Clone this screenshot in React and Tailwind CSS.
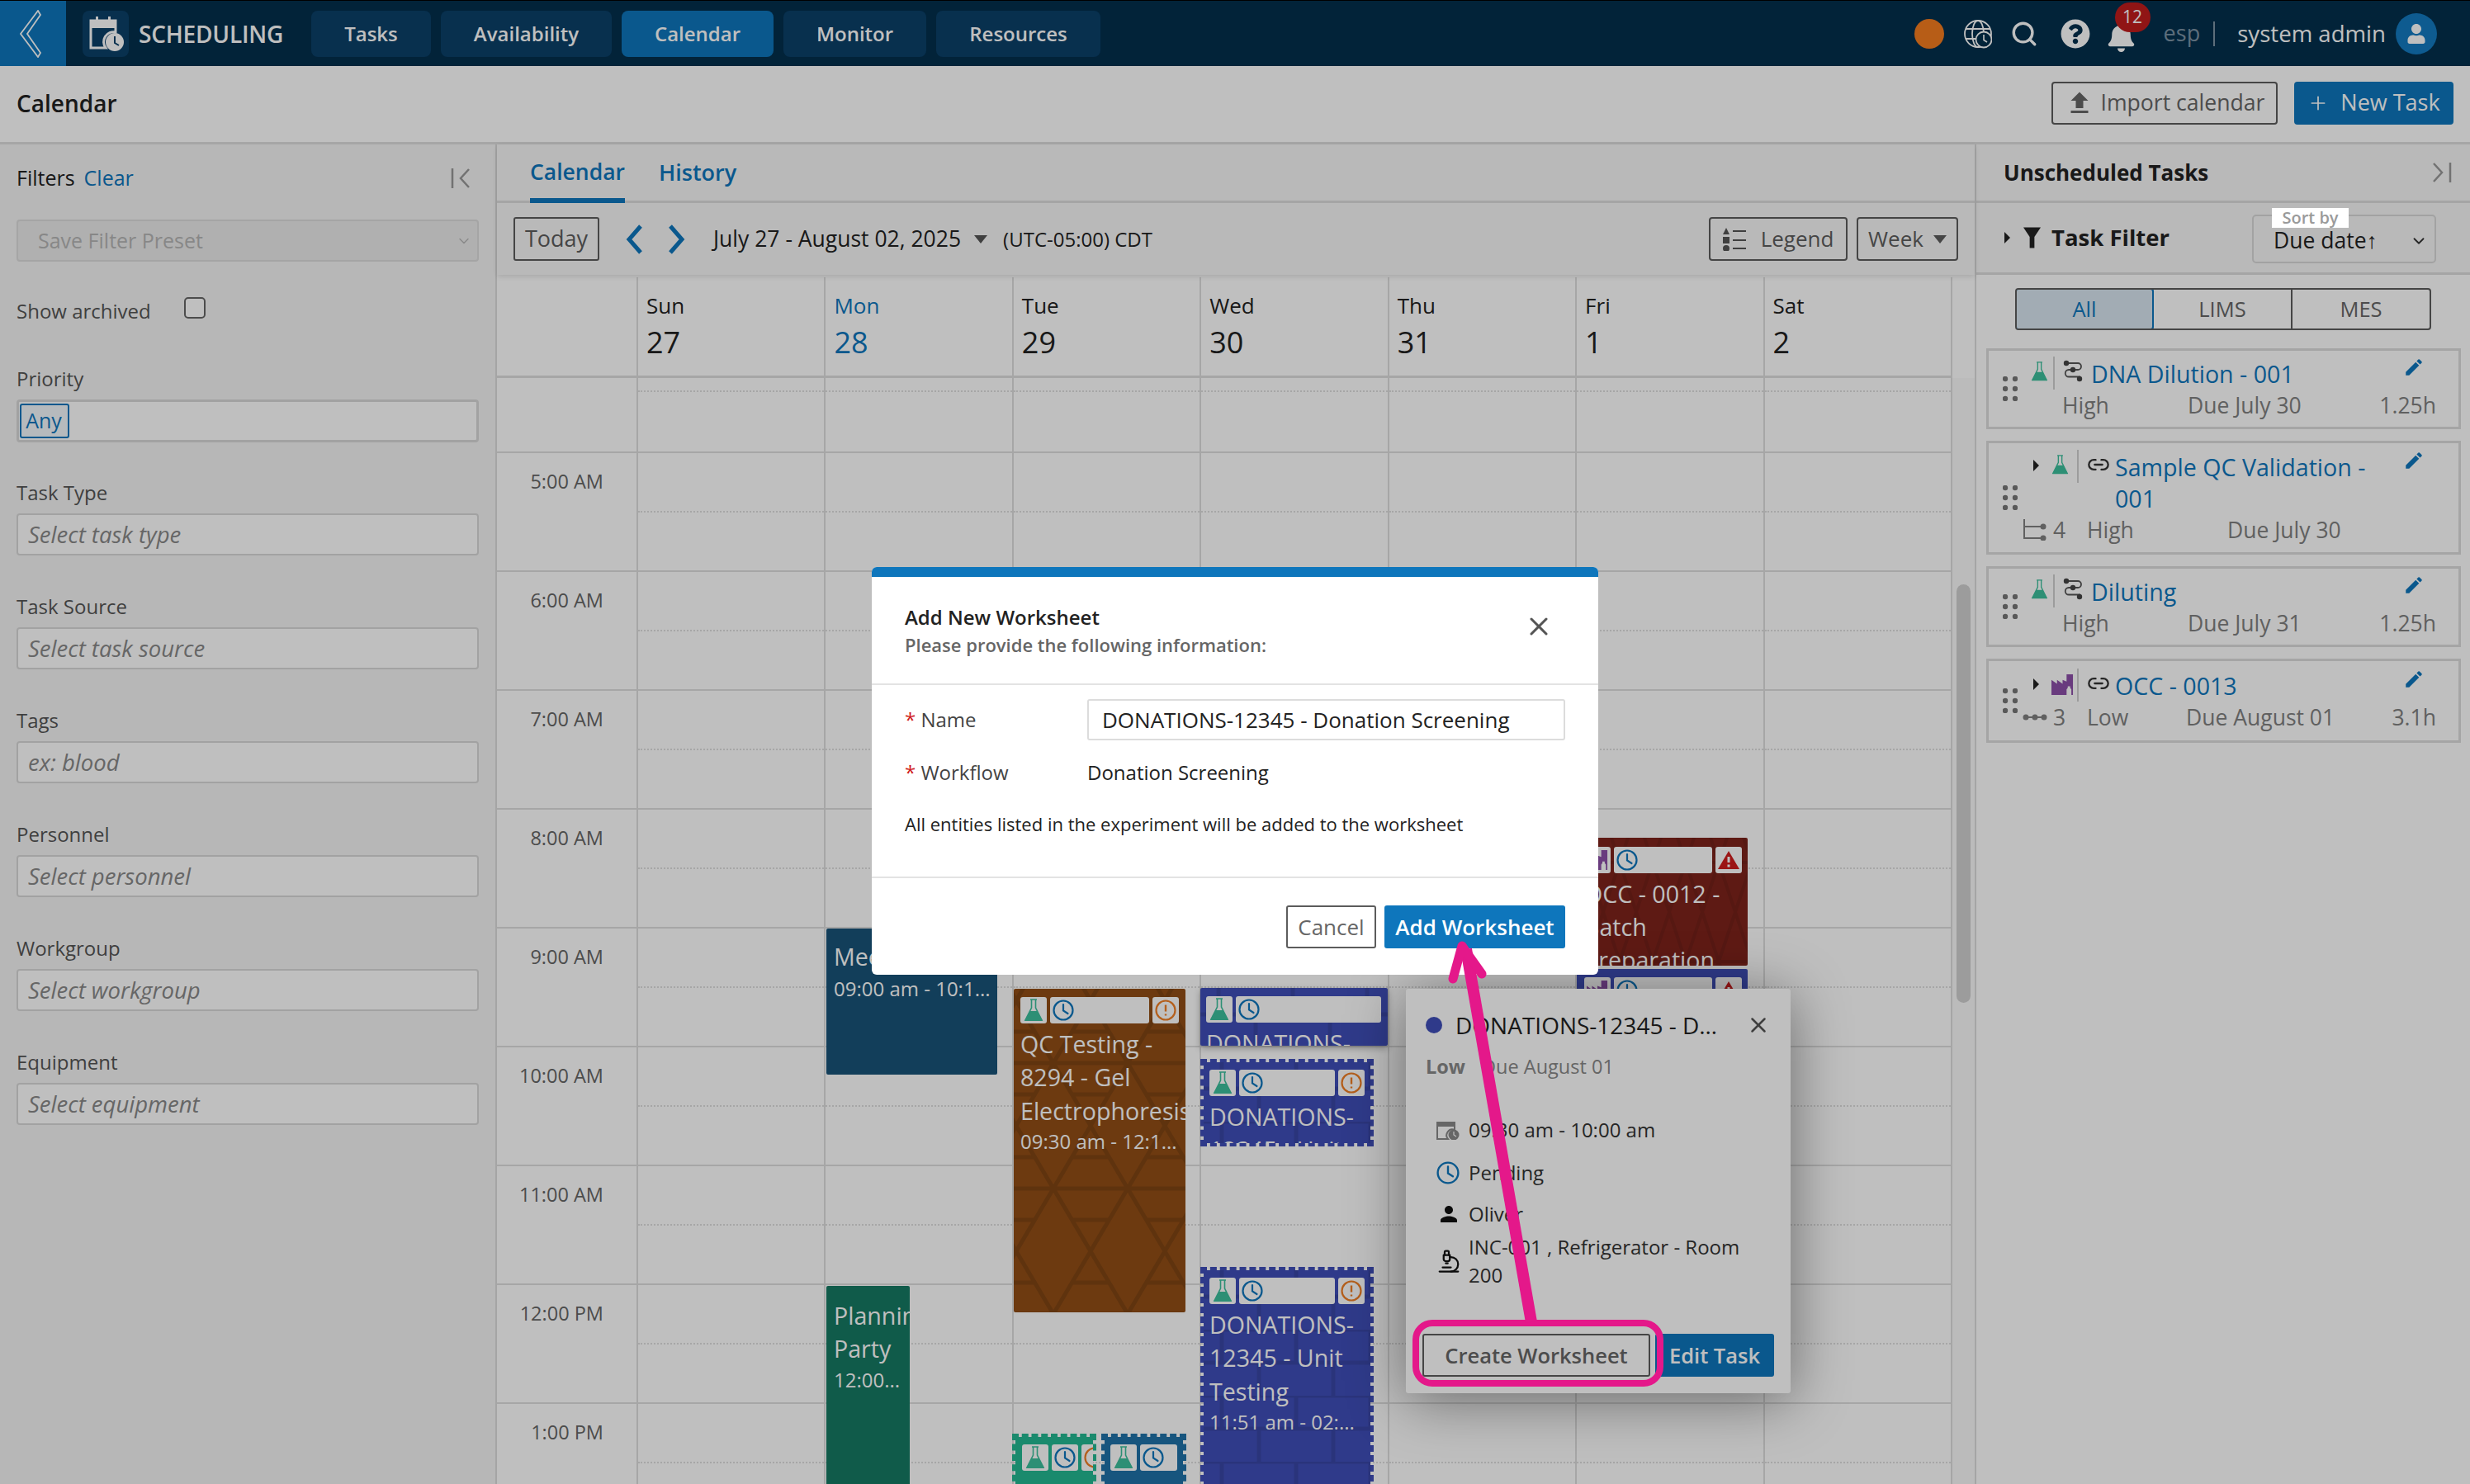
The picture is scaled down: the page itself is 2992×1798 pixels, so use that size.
import React from 'react';
import { Search, Plus, Link2, Microscope, ChevronDown, X } from 'lucide-react';
import { MdEdit, MdPerson, MdFileUpload } from 'react-icons/md';
import { FaBell, FaQuestionCircle, FaUser } from 'react-icons/fa';

const Flask = ({ s = 'w-[24px] h-[28px]' }) => (
  <svg viewBox="0 0 24 28" className={s}>
    <path d="M8 1h8M9.5 1v10L2 26h20L14.5 11V1" fill="none" stroke="#3cbf9c" strokeWidth="1.6" />
    <path d="M7.5 15h9L23 27H1z" fill="#3cbf9c" />
  </svg>
);
const Clock = ({ s = 'w-[26px] h-[26px]' }) => (
  <svg viewBox="0 0 26 26" className={s}>
    <circle cx="13" cy="13" r="11.5" fill="none" stroke="#0e76bc" strokeWidth="2.2" />
    <path d="M13 6v7.5l5.5 3.5" fill="none" stroke="#0e76bc" strokeWidth="2.2" strokeLinecap="round" />
  </svg>
);
const AlertC = () => (
  <svg viewBox="0 0 26 26" className="w-[26px] h-[26px]">
    <circle cx="13" cy="13" r="11.5" fill="none" stroke="#f07f26" strokeWidth="2.2" />
    <path d="M13 6.5v8M13 17.5v2" fill="none" stroke="#f07f26" strokeWidth="2.4" />
  </svg>
);
const AlertT = () => (
  <svg viewBox="0 0 26 24" className="w-[26px] h-[24px]">
    <path d="M13 1L26 23H0z" fill="#cf1d1d" />
    <path d="M13 8v7M13 17.5v3" stroke="#fff" strokeWidth="3" />
  </svg>
);
const Factory = ({ s = 'w-[28px] h-[28px]' }) => (
  <svg viewBox="0 0 28 28" className={s}>
    <path d="M0 27V8l7 5V8l7 5V8l5 2V1h8v26z" fill="#8c4fa8" />
    <path d="M19 27v-7l1.500-2V16h3v2l1.500 2v7z" fill="#fff" />
  </svg>
);
const Workflow = () => (
  <svg viewBox="0 0 24 28" className="w-[24px] h-[28px]">
    <path d="M4 4h14a4 4 0 010 8H7a4 4 0 000 8.500h14" fill="none" stroke="#555" strokeWidth="1.8" />
    <circle cx="4" cy="4" r="3.200" fill="#444" /><circle cx="12" cy="12" r="3.200" fill="#444" /><circle cx="20" cy="23" r="3.200" fill="#444" />
  </svg>
);
const Dots = () => (
  <svg viewBox="0 0 18 30" className="w-[18px] h-[30px] shrink-0">
    {[3, 15].map((x) => [3, 15, 27].map((y) => <circle key={x + '-' + y} cx={x} cy={y} r="3.200" fill="#777" />))}
  </svg>
);
const Caret = () => (
  <svg viewBox="0 0 7 14" className="w-[7px] h-[14px] shrink-0"><path d="M0 0l7 7-7 7z" fill="#222" /></svg>
);
const Pattern = ({ kind, id }) => (
  <svg className="absolute inset-0 w-full h-full">
    <defs>
      {kind === 'cube' && (
        <pattern id={id} width="90" height="152" patternUnits="userSpaceOnUse" x="3" y="90">
          <path d="M45 0L90 76L45 152L0 76ZM0 0H90M0 38H22M68 38H90M0 114H22M68 114H90M0 152H90" fill="none" stroke="rgba(0,0,0,.13)" strokeWidth="5" />
        </pattern>
      )}
      {kind === 'brick' && (
        <pattern id={id} width="90" height="80" patternUnits="userSpaceOnUse" y="-8">
          <path d="M0 0H90M0 40H90M22 0V40M67 40V80" fill="none" stroke="rgba(0,0,0,.1)" strokeWidth="5" />
        </pattern>
      )}
      {kind === 'tri' && (
        <pattern id={id} width="80" height="120" patternUnits="userSpaceOnUse" x="-8" y="-30">
          <path d="M0 0L40 120M80 0L40 120M0 120L40 0M80 120L40 0M0 60H80" fill="none" stroke="rgba(0,0,0,.09)" strokeWidth="4" />
        </pattern>
      )}
    </defs>
    <rect width="100%" height="100%" fill={`url(#${id})`} />
  </svg>
);
const Tiles = ({ wide, alert, tri, factory, cls = 'gap-[4px]' }) => (
  <div className={`relative flex h-[32px] ${cls}`}>
    <div className="w-[32px] h-full bg-white rounded-[3px] flex items-center justify-center shrink-0">
      {factory ? <Factory s="w-[26px] h-[26px]" /> : <Flask />}
    </div>
    <div className={`${wide} h-full bg-white rounded-[3px] flex items-center pl-[3px] shrink-0`}><Clock /></div>
    {alert && <div className="w-[32px] h-full bg-white rounded-[3px] flex items-center justify-center shrink-0"><AlertC /></div>}
    {tri && <div className="w-[32px] h-full bg-white rounded-[3px] flex items-center justify-center shrink-0"><AlertT /></div>}
  </div>
);
const Title = ({ children }) => <div className="relative text-[28.6px] leading-[40.3px] text-white">{children}</div>;
const Time = ({ children }) => <div className="relative text-[24px] leading-[34px] text-white whitespace-nowrap">{children}</div>;

const hours = ['5:00 AM', '6:00 AM', '7:00 AM', '8:00 AM', '9:00 AM', '10:00 AM', '11:00 AM', '12:00 PM', '1:00 PM'];
const days = [['Sun', '27'], ['Mon', '28'], ['Tue', '29'], ['Wed', '30'], ['Thu', '31'], ['Fri', '1'], ['Sat', '2']];
const filters = [
  ['Task Source', 'Select task source'], ['Tags', 'ex: blood'], ['Personnel', 'Select personnel'],
  ['Workgroup', 'Select workgroup'], ['Equipment', 'Select equipment'],
];

function TopBar() {
  return (
    <header className="h-20 flex items-center bg-[#032f4d] border-t border-black text-white shrink-0">
      <div className="w-20 h-full bg-[#0e76bc] flex items-center justify-center pr-[6px]">
        <svg viewBox="0 0 28 58" className="w-[28px] h-[58px]"><path d="M23 1L2 29l21 28 3-5L10 29 26 6z" fill="none" stroke="#fff" strokeWidth="1.800" /></svg>
      </div>
      <div className="ml-5 w-14 h-14 rounded-[8px] bg-[#0b4069] flex items-center justify-center">
        <svg viewBox="0 0 44 44" className="w-[44px] h-[44px]">
          <path d="M4 6h30v14a12 12 0 00-12 19H4z" fill="none" stroke="#fff" strokeWidth="3" />
          <path d="M4 6h30v9H4zM10 1h3v7h-3zM25 1h3v7h-3z" fill="#fff" />
          <circle cx="33" cy="32" r="11" fill="#fff" />
          <path d="M33 25v8l5 3" fill="none" stroke="#0b4069" strokeWidth="2" />
        </svg>
      </div>
      <div className="ml-3 w-[209px] text-[28px] font-semibold tracking-[-0.2px]">SCHEDULING</div>
      <nav className="flex gap-3 text-[24px] font-semibold">
        <div className="w-[145px] h-14 rounded-[8px] bg-[#0b4069] flex items-center justify-center">Tasks</div>
        <div className="w-[207px] h-14 rounded-[8px] bg-[#0b4069] flex items-center justify-center">Availability</div>
        <div className="w-[184px] h-14 rounded-[8px] bg-[#0e76bc] flex items-center justify-center">Calendar</div>
        <div className="w-[173px] h-14 rounded-[8px] bg-[#0b4069] flex items-center justify-center">Monitor</div>
        <div className="w-[199px] h-14 rounded-[8px] bg-[#0b4069] flex items-center justify-center">Resources</div>
      </nav>
      <div className="ml-auto flex items-center pr-10">
        <div className="w-9 h-9 rounded-full bg-[#f57c1f] -ml-[2px]"></div>
        <div className="ml-6 relative w-[34px] h-[36px]">
          <svg viewBox="0 0 34 36" className="w-[34px] h-[36px]">
            <g fill="none" stroke="#fff" strokeWidth="1.800">
              <circle cx="17" cy="18" r="16" /><ellipse cx="17" cy="18" rx="7" ry="16" /><path d="M2 12h30M2 24h14" />
            </g>
            <circle cx="24" cy="25" r="9.500" fill="#032f4d" stroke="#fff" strokeWidth="1.800" />
            <path d="M24 19v6.500l4 2.500" fill="none" stroke="#fff" strokeWidth="1.600" />
          </svg>
        </div>
        <Search className="ml-[22px] w-[34px] h-[36px]" strokeWidth={2.400} />
        <FaQuestionCircle className="ml-[27px] w-9 h-9" />
        <div className="ml-[21px] relative w-[33px] h-[36px] mt-[8px]">
          <FaBell className="w-[33px] h-[36px]" />
          <div className="absolute left-[9px] top-[-24px] w-[43px] h-[36px] rounded-full bg-[#c01c1c] flex items-center justify-center text-[21px]">12</div>
        </div>
        <div className="ml-[35px] text-[27px] text-[#7d93a5]">esp</div>
        <div className="ml-[16px] w-[2px] h-[30px] bg-[#7d93a5]"></div>
        <div className="ml-[27px] text-[27.600px]">system admin</div>
        <div className="ml-3 w-[50px] h-[50px] rounded-full bg-[#137ac0] flex items-center justify-center"><FaUser className="w-[24px] h-[24px]" /></div>
      </div>
    </header>
  );
}

function PageHeader() {
  return (
    <div className="h-[95px] shrink-0 bg-white border-b-[3px] border-[#dedede] flex items-center pl-5 pr-5 pb-[3px]">
      <div className="text-[28px] font-semibold text-[#222]">Calendar</div>
      <button className="ml-auto w-[274px] h-[52px] border-[2px] border-[#5c5c5c] rounded-[4px] flex items-center justify-center text-[26.600px] text-[#666]">
        <MdFileUpload className="w-[36px] h-[42px] mr-[8px]" />Import calendar
      </button>
      <button className="ml-5 w-[193px] h-[52px] rounded-[4px] bg-[#0e76bc] text-white flex items-center justify-center text-[27px] font-medium">
        <Plus className="w-[26px] h-[26px] mr-[14px]" strokeWidth={1.600} />New Task
      </button>
    </div>
  );
}

function Field({ label, children }) {
  return (
    <div>
      <div className="text-[24px] leading-[32px] text-[#555]">{label}</div>
      {children}
    </div>
  );
}

function LeftPanel() {
  return (
    <aside className="w-[602px] shrink-0 bg-[#f5f5f5] border-r-2 border-[#dcdcdc] px-5 pt-[23px]">
      <div className="flex items-center h-[36px] text-[25px] font-medium">
        <span className="text-[#222]">Filters</span>
        <span className="ml-[11px] text-[#0e76bc]">Clear</span>
        <svg viewBox="0 0 24 24" className="ml-auto mr-[10px] w-[24px] h-[24px]"><path d="M2 0v24M22 1L12 12l10 11" fill="none" stroke="#999" strokeWidth="2.500" /></svg>
      </div>
      <div className="mt-[32px] h-[51px] w-[560px] rounded-[4px] border-2 border-[#dcdcdc] bg-[#ebebeb] flex items-center pl-[24px] pr-[6px] text-[25px] text-[#b5b5b5]">
        Save Filter Preset
        <ChevronDown className="ml-auto w-[20px] h-[20px]" strokeWidth={1.500} />
      </div>
      <div className="mt-[47px] flex items-center h-[26px]">
        <span className="text-[24px] text-[#555]">Show archived</span>
        <div className="ml-[40px] -mt-[8px] w-[26px] h-[26px] rounded-[5px] border-2 border-[#666] bg-white"></div>
      </div>
      <div className="mt-[53px]">
        <Field label="Priority">
          <div className="mt-[9px] h-[52px] rounded-[4px] border-[3px] border-[#d8d8d8] bg-white flex items-center pl-[1px]">
            <span className="w-[60px] h-[42px] rounded-[3px] border-2 border-[#0e76bc] text-[#0e76bc] text-[25px] flex items-center justify-center pr-[2px] bg-[#f3f8fc]">Any</span>
          </div>
        </Field>
      </div>
      <div className="mt-[45px] flex flex-col gap-[46px] w-[560px]">
        <Field label="Task Type">
          <div className="mt-[9px] h-[51px] rounded-[4px] border-2 border-[#d8d8d8] bg-white flex items-center pl-[12px] text-[27.500px] italic text-[#888]">Select task type</div>
        </Field>
        {filters.map(([l, p]) => (
          <Field key={l} label={l}>
            <div className="mt-[9px] h-[51px] rounded-[4px] border-2 border-[#d8d8d8] bg-white flex items-center pl-[12px] text-[27.500px] italic text-[#888]">{p}</div>
          </Field>
        ))}
      </div>
    </aside>
  );
}

function Toolbar() {
  return (
    <div className="relative z-10 shrink-0 bg-[#f7f7f7] shadow-[0_2px_6px_rgba(0,0,0,0.12)]">
      <div className="h-[71px] border-b-[3px] border-[#dcdcdc] flex items-stretch pl-[40px]">
        <div className="relative flex items-center text-[26.500px] font-semibold text-[#0e76bc]">
          Calendar
          <div className="absolute left-0 right-0 bottom-[-3px] h-[6px] bg-[#0e76bc]"></div>
        </div>
        <div className="ml-[41px] flex items-center text-[27px] font-semibold text-[#0e76bc]">History</div>
      </div>
      <div className="h-[87px] flex items-center pl-[20px] pr-[20px]">
        <button className="w-[104px] h-[53px] rounded-[3px] border-2 border-[#5c5c5c] text-[27px] text-[#5c5c5c] font-medium">Today</button>
        <svg viewBox="0 0 22 36" className="ml-[32px] w-[22px] h-[36px]"><path d="M18 2L4 18l14 16" fill="none" stroke="#0e76bc" strokeWidth="5" /></svg>
        <svg viewBox="0 0 22 36" className="ml-[28px] w-[22px] h-[36px]"><path d="M4 2l14 16L4 34" fill="none" stroke="#0e76bc" strokeWidth="5" /></svg>
        <span className="ml-[34px] text-[26.500px] font-medium text-[#222] whitespace-nowrap">July 27 - August 02, 2025</span>
        <svg viewBox="0 0 16 10" className="ml-[16px] w-[16px] h-[10px]"><path d="M0 0h16L8 10z" fill="#555" /></svg>
        <span className="ml-[19px] text-[24px] text-[#222] whitespace-nowrap">(UTC-05:00) CDT</span>
        <button className="ml-auto w-[168px] h-[53px] rounded-[4px] border-2 border-[#5c5c5c] flex items-center justify-center text-[26px] text-[#5c5c5c]">
          <svg viewBox="0 0 28 28" className="w-[28px] h-[28px] mr-[18px]">
            <path d="M4 0l4 8H0zM0 11h8v8H0z" fill="#555" /><circle cx="4" cy="25" r="4" fill="#555" />
            <path d="M12 4h16M12 15h16M12 25h16" stroke="#555" strokeWidth="2" />
          </svg>Legend
        </button>
        <button className="ml-[11px] w-[123px] h-[53px] rounded-[4px] border-2 border-[#5c5c5c] flex items-center justify-center text-[26px] text-[#5c5c5c]">
          Week<svg viewBox="0 0 16 10" className="ml-[12px] w-[16px] h-[10px]"><path d="M0 0h16L8 10z" fill="#5c5c5c" /></svg>
        </button>
      </div>
    </div>
  );
}

function Grid() {
  return (
    <div className="relative flex-1 overflow-hidden bg-white">
      <div className="flex w-full h-full">
        <div className="w-[1761px] shrink-0">
          <div className="grid grid-cols-[169px_repeat(7,227.43px)] h-[125px] border-b-[3px] border-[#dedede] pt-[3px]">
            <div></div>
            {days.map(([d, n]) => (
              <div key={d} className={`border-l-2 border-[#dedede] pl-[10px] pt-[16px] ${d === 'Mon' ? 'text-[#0e76bc]' : 'text-[#222]'}`}>
                <div className="text-[26px] leading-[36px]">{d}</div>
                <div className="text-[36px] leading-[48px] mt-[3px]">{n}</div>
              </div>
            ))}
          </div>
          <div className="grid grid-cols-[169px_repeat(7,227.43px)] h-[89px]">
            <div></div>
            {days.map(([d]) => (
              <div key={d} className="border-l-2 border-[#dedede]">
                <div className="h-[17px] border-b-2 border-dotted border-[#dedede]"></div>
              </div>
            ))}
          </div>
          {hours.map((h) => (
            <div key={h} className="grid grid-cols-[169px_repeat(7,227.43px)] h-[144px] border-t-2 border-[#dedede]">
              <div className="pr-[40px] pt-[18px] text-right text-[23.500px] leading-[32px] text-[#666]">{h}</div>
              {days.map(([d]) => (
                <div key={d} className="border-l-2 border-[#dedede]">
                  <div className="h-[72px] border-b-2 border-dotted border-[#dedede]"></div>
                </div>
              ))}
            </div>
          ))}
        </div>
        <div className="flex-1 border-l-2 border-[#dedede] mt-[3px]">
          <div className="mt-[122px] h-full bg-[#fafafa] pt-[250px] pl-[5px]">
            <div className="w-[17px] h-[507px] rounded-full bg-[#d0d0d0]"></div>
          </div>
        </div>
      </div>

      <div className="absolute left-[399px] top-[792px] w-[207px] h-[177px] bg-[#185379] rounded-[2px] pl-[9px] pt-[14px] overflow-hidden">
        <div className="text-[28.600px] leading-[40px] text-white whitespace-nowrap">Meeting</div>
        <div className="mt-[2px]"><Time>09:00 am - 10:1...</Time></div>
      </div>

      <div className="absolute left-[399px] top-[1225px] w-[101px] h-[300px] bg-[#167a63] rounded-[2px] pl-[9px] pt-[16px] overflow-hidden">
        <Title>Planning Party</Title>
        <Time>12:00...</Time>
      </div>

      <div className="absolute left-[626px] top-[865px] w-[208px] h-[392px] bg-[#924e16] rounded-[2px] pl-[8px] pt-[10px] overflow-hidden">
        <Pattern kind="cube" id="p1" />
        <Tiles wide="w-[120px]" alert />
        <div className="pt-[5px]">
          <div className="relative text-[28.600px] leading-[40.300px] text-white">QC Testing -<br />8294 - Gel<br /><span className="whitespace-nowrap">Electrophoresis</span></div>
          <Time>09:30 am - 12:1...</Time>
        </div>
      </div>

      <div className="absolute left-[852px] top-[864px] w-[227px] h-[70px] bg-[#3f4eb8] rounded-[2px] pl-[7px] pt-[10px] overflow-hidden shadow-[0_3px_8px_rgba(0,0,0,0.3)]">
        <Pattern kind="brick" id="p2" />
        <Tiles wide="w-[176px]" />
        <div className="pt-[5px]"><Title>DONATIONS-</Title></div>
      </div>

      <div className="absolute left-[852px] top-[950px] w-[210px] h-[106px] border-[4px] border-dashed border-[#3f4eb8] bg-[#3f4eb8] bg-clip-padding pl-[7px] pt-[9px] overflow-hidden">
        <Pattern kind="brick" id="p3" />
        <Tiles wide="w-[116px]" alert />
        <div className="pt-[5px]"><Title>DONATIONS-<br />12345 - Unit</Title></div>
      </div>

      <div className="absolute left-[852px] top-[1202px] w-[210px] h-[320px] border-[4px] border-dashed border-[#3f4eb8] bg-[#3f4eb8] bg-clip-padding pl-[7px] pt-[9px] overflow-hidden">
        <Pattern kind="brick" id="p4" />
        <Tiles wide="w-[116px]" alert />
        <div className="pt-[5px]">
          <Title>DONATIONS-<br />12345 - Unit<br />Testing</Title>
          <Time>11:51 am - 02:...</Time>
        </div>
      </div>

      <div className="absolute left-[624px] top-[1404px] w-[102px] h-[120px] border-[4px] border-dashed border-[#23b892] bg-[#23b892] bg-clip-padding pl-[8px] pt-[9px] overflow-hidden">
        <Tiles wide="w-[32px]" alert />
      </div>
      <div className="absolute left-[732px] top-[1404px] w-[103px] h-[120px] border-[4px] border-dashed border-[#1f72a9] bg-[#1f72a9] bg-clip-padding pl-[7px] pt-[9px] overflow-hidden">
        <Tiles wide="w-[45px]" />
      </div>

      <div className="absolute left-[1308px] top-[682px] w-[207px] h-[155px] bg-[#7e231b] rounded-[2px] pl-[9px] pt-[11px] overflow-hidden">
        <Pattern kind="tri" id="p5" />
        <Tiles factory wide="w-[119px]" tri />
        <div className="pt-[5px]"><div className="relative text-[28.600px] leading-[40px] text-white">OCC - 0012 -<br />Batch<br />Preparation</div></div>
      </div>
      <div className="absolute left-[1308px] top-[841px] w-[207px] h-[70px] bg-[#3f4eb8] rounded-[2px] pl-[9px] pt-[10px] overflow-hidden">
        <Tiles factory wide="w-[119px]" tri />
      </div>

      <div className="absolute left-[1101px] top-[865px] w-[466px] h-[490px] bg-white rounded-[3px] shadow-[0_8px_70px_rgba(0,0,0,0.45)] z-10 pl-[24px] pr-[20px] pt-[26px]">
        <div className="flex items-center h-[36px]">
          <div className="w-[20px] h-[20px] rounded-full bg-[#3f4eb8] shrink-0"></div>
          <div className="ml-[16px] w-[330px] truncate text-[28px] text-[#222]">DONATIONS-12345 - Donation Screening</div>
          <X className="ml-[22px] w-[30px] h-[30px] text-[#555]" strokeWidth={2} />
        </div>
        <div className="mt-[16px] text-[23.500px] leading-[32px] text-[#888]"><span className="font-bold">Low</span> <span className="ml-[14px]">Due August 01</span></div>
        <div className="mt-[44px] pl-[13px] text-[24px] leading-[34px] text-[#333]">
          <div className="flex items-center h-[34px]">
            <svg viewBox="0 0 28 24" className="w-[28px] h-[24px] shrink-0">
              <path d="M1 3h21v9a7 7 0 00-8 11H1z" fill="none" stroke="#888" strokeWidth="2" /><path d="M1 3h21v5H1z" fill="#888" /><circle cx="21" cy="18" r="6.500" fill="#888" /><path d="M21 14v4l3 2" stroke="#fff" strokeWidth="1.200" fill="none" />
            </svg>
            <span className="ml-[11px]">09:30 am - 10:00 am</span>
          </div>
          <div className="flex items-center h-[34px] mt-[18px]"><Clock s="w-[28px] h-[28px] shrink-0" /><span className="ml-[11px]">Pending</span></div>
          <div className="flex items-center h-[34px] mt-[16px]"><MdPerson className="w-[30px] h-[30px] shrink-0 text-[#111]" /><span className="ml-[9px]">Oliver</span></div>
          <div className="flex items-center mt-[6px]">
            <Microscope className="w-[30px] h-[34px] shrink-0 text-[#111]" strokeWidth={1.800} />
            <span className="ml-[9px]">INC-001 , Refrigerator - Room 200</span>
          </div>
        </div>
        <div className="absolute left-[20px] top-[418px] flex">
          <button className="w-[276px] h-[52px] rounded-[3px] border-2 border-[#5c5c5c] bg-white text-[25.500px] font-semibold text-[#666]">Create Worksheet</button>
          <button className="ml-[6px] w-[144px] h-[52px] rounded-[3px] bg-[#0e76bc] text-white text-[25.500px] font-semibold">Edit Task</button>
        </div>
      </div>
    </div>
  );
}

function TaskCard({ h, icon, link, caret, title, pri, due, dur, sub, subw, priw }) {
  return (
    <div className={`${h} flex items-center border-[3px] border-[#dcdcdc] bg-white pl-[17px] pr-[27px]`}>
      <Dots />
      <div className="flex-1 min-w-0 ml-[11px] text-[26.500px] leading-[38px] text-[#808080]">
        <div className="flex items-start">
          {caret ? <div className="w-[30px] pl-[8px] pt-[12px] shrink-0"><Caret /></div> : null}
          <div className={`${link ? 'w-[28px]' : 'w-[26px] pl-[5px]'} shrink-0 pt-[6px]`}>{icon}</div>
          <div className={`${link ? 'ml-[3px]' : 'ml-[6px]'} w-[2px] h-[40px] bg-[#d0d0d0] shrink-0`}></div>
          <div className="ml-[10px] w-[26px] pt-[4px] shrink-0">
            {link ? <Link2 className="w-[28px] h-[28px] text-[#333]" /> : <Workflow />}
          </div>
          <div className="ml-[8px] pt-[2px] flex-1 text-[28.600px] text-[#0e76bc]">{title}</div>
          <MdEdit className="w-[26px] h-[26px] text-[#0e76bc] shrink-0 ml-[10px] mr-[14px]" />
        </div>
        <div className="flex">
          <div className={`${subw} shrink-0 flex items-center`}>{sub}</div>
          <div className={priw}>{pri}</div>
          <div className="flex-1 whitespace-nowrap">{due}</div>
          <div>{dur}</div>
        </div>
      </div>
    </div>
  );
}

function RightPanel() {
  return (
    <aside className="flex-1 bg-white border-l-2 border-[#dcdcdc] flex flex-col">
      <div className="h-[71px] bg-[#f7f7f7] border-b-[3px] border-[#dcdcdc] flex items-center pl-[33px] pr-[22px] shrink-0">
        <div className="text-[26px] font-bold text-[#222]">Unscheduled Tasks</div>
        <svg viewBox="0 0 24 24" className="ml-auto w-[24px] h-[24px]"><path d="M22 0v24M2 1l10 11L2 23" fill="none" stroke="#999" strokeWidth="2.500" /></svg>
      </div>
      <div className="relative h-[87px] bg-[#f7f7f7] border-b-[3px] border-[#dcdcdc] flex items-center pl-[34px] shrink-0">
        <Caret />
        <svg viewBox="0 0 22 26" className="ml-[16px] w-[21px] h-[26px]"><path d="M0 0h22L14 12v14H8V12z" fill="#222" /></svg>
        <span className="ml-[13px] text-[27.500px] font-bold text-[#222]">Task Filter</span>
        <div className="absolute left-[334px] top-[14px] w-[223px] h-[59px] rounded-[5px] border-2 border-[#d8d8d8] flex items-center pl-[24px] pr-[8px] pt-[4px] text-[26.500px] text-[#222]">
          Due date↑
          <ChevronDown className="ml-auto w-[22px] h-[22px] text-[#333]" strokeWidth={2} />
        </div>
      </div>
      <div className="flex justify-center pl-[1px] pr-[1px] mt-[16px]">
        <div className="flex w-[504px] h-[51px] rounded-[4px] border-2 border-[#5c5c5c] overflow-hidden text-[25.500px] text-[#666]">
          <div className="w-[168px] bg-[#d9e6f0] border-2 border-[#0e76bc] -m-[2px] mr-0 rounded-[4px] text-[#0e76bc] flex items-center justify-center">All</div>
          <div className="flex-1 flex items-center justify-center">LIMS</div>
          <div className="flex-1 border-l-2 border-[#5c5c5c] flex items-center justify-center">MES</div>
        </div>
      </div>
      <div className="mt-[22px] pl-[12px] pr-[11px] flex flex-col gap-[14px]">
        <TaskCard h="h-[98px]" icon={<Flask s="w-[21px] h-[24px]" />} title="DNA Dilution - 001" pri="High" due="Due July 30" dur="1.25h" subw="w-[43px]" priw="w-[152px]" />
        <TaskCard h="h-[138px]" caret link icon={<Flask s="w-[21px] h-[24px]" />} title="Sample QC Validation - 001" pri="High" due="Due July 30" subw="w-[73px]" priw="w-[170px]"
          sub={<><svg viewBox="0 0 28 26" className="w-[28px] h-[26px] -ml-[4px] mr-[8px] shrink-0"><path d="M1 0v23h22M1 9h22" fill="none" stroke="#808080" strokeWidth="2" /><circle cx="24" cy="9" r="3.500" fill="#808080" /><circle cx="24" cy="23" r="3.500" fill="#808080" /></svg>4</>} />
        <TaskCard h="h-[98px]" icon={<Flask s="w-[21px] h-[24px]" />} title="Diluting" pri="High" due="Due July 31" dur="1.25h" subw="w-[43px]" priw="w-[152px]" />
        <TaskCard h="h-[102px]" caret link icon={<Factory s="w-[27px] h-[27px]" />} title="OCC - 0013" pri="Low" due="Due August 01" dur="3.1h" subw="w-[73px]" priw="w-[120px]"
          sub={<><svg viewBox="0 0 30 10" className="w-[30px] h-[10px] -ml-[5px] mr-[7px] shrink-0"><path d="M2 5h26" stroke="#808080" strokeWidth="2" /><circle cx="4" cy="5" r="3.500" fill="#808080" /><circle cx="15" cy="5" r="3.500" fill="#808080" /><circle cx="26" cy="5" r="3.500" fill="#808080" /></svg>3</>} />
      </div>
    </aside>
  );
}

function Modal() {
  return (
    <div className="absolute left-[1056px] top-[687px] z-30 w-[880px] h-[494px] rounded-[6px] bg-white overflow-hidden">
      <div className="h-[12px] bg-[#0e76bc]"></div>
      <div className="h-[131px] border-b-2 border-[#e3e3e3] pl-[40px] pr-[54px] pt-[31px] flex justify-between">
        <div>
          <div className="text-[24px] leading-[36px] font-semibold text-[#222]">Add New Worksheet</div>
          <div className="text-[22px] leading-[30px] font-semibold text-[#666]">Please provide the following information:</div>
        </div>
        <X className="w-[36px] h-[36px] mt-[11px] text-[#555]" strokeWidth={2} />
      </div>
      <div className="h-[234px] border-b-2 border-[#e3e3e3] pl-[40px] pr-[40px] pt-[17px] text-[24px] text-[#444]">
        <div className="flex items-center h-[50px]">
          <div className="w-[221px]"><span className="text-[#d01c1c]">*</span> Name</div>
          <div className="flex-1 h-[50px] rounded-[3px] border-2 border-[#dcdcdc] flex items-center pl-[16px] text-[26px] text-[#222]">DONATIONS-12345 - Donation Screening</div>
        </div>
        <div className="flex items-center h-[36px] mt-[21px]">
          <div className="w-[221px]"><span className="text-[#d01c1c]">*</span> Workflow</div>
          <div className="text-[#222]">Donation Screening</div>
        </div>
        <div className="mt-[29px] text-[22px] leading-[30px] text-[#222]">All entities listed in the experiment will be added to the worksheet</div>
      </div>
      <div className="flex justify-end pr-[40px] pt-[33px]">
        <button className="w-[109px] h-[52px] rounded-[3px] border-2 border-[#5c5c5c] text-[26px] font-medium text-[#666]">Cancel</button>
        <button className="ml-[10px] w-[219px] h-[52px] rounded-[3px] bg-[#0e76bc] text-white text-[26px] font-semibold">Add Worksheet</button>
      </div>
    </div>
  );
}

export default function App() {
  return (
    <div className="relative w-[2992px] h-[1798px] overflow-hidden flex flex-col bg-white font-['Open_Sans',sans-serif]">
      <TopBar />
      <PageHeader />
      <div className="flex flex-1 min-h-0">
        <LeftPanel />
        <main className="w-[1790px] shrink-0 flex flex-col min-h-0">
          <Toolbar />
          <Grid />
        </main>
        <RightPanel />
      </div>
      <div className="absolute inset-0 z-20 bg-black/25"></div>
      <div className="absolute left-[2752px] top-[252px] z-30 w-[93px] h-[24px] bg-white flex items-center justify-center text-[20px] font-semibold text-[#9a9a9a]">Sort by</div>
      <Modal />
      <svg className="absolute inset-0 z-40 w-[2992px] h-[1798px] pointer-events-none" viewBox="0 0 2992 1798">
        <rect x="1715" y="1603" width="296" height="73" rx="20" fill="none" stroke="#e4188a" strokeWidth="8" />
        <path d="M1776 1150L1855 1602" fill="none" stroke="#e4188a" strokeWidth="14" />
        <path d="M1760 1186L1771 1146L1795 1180" fill="none" stroke="#e4188a" strokeWidth="11" strokeLinecap="round" strokeLinejoin="round" />
      </svg>
    </div>
  );
}
